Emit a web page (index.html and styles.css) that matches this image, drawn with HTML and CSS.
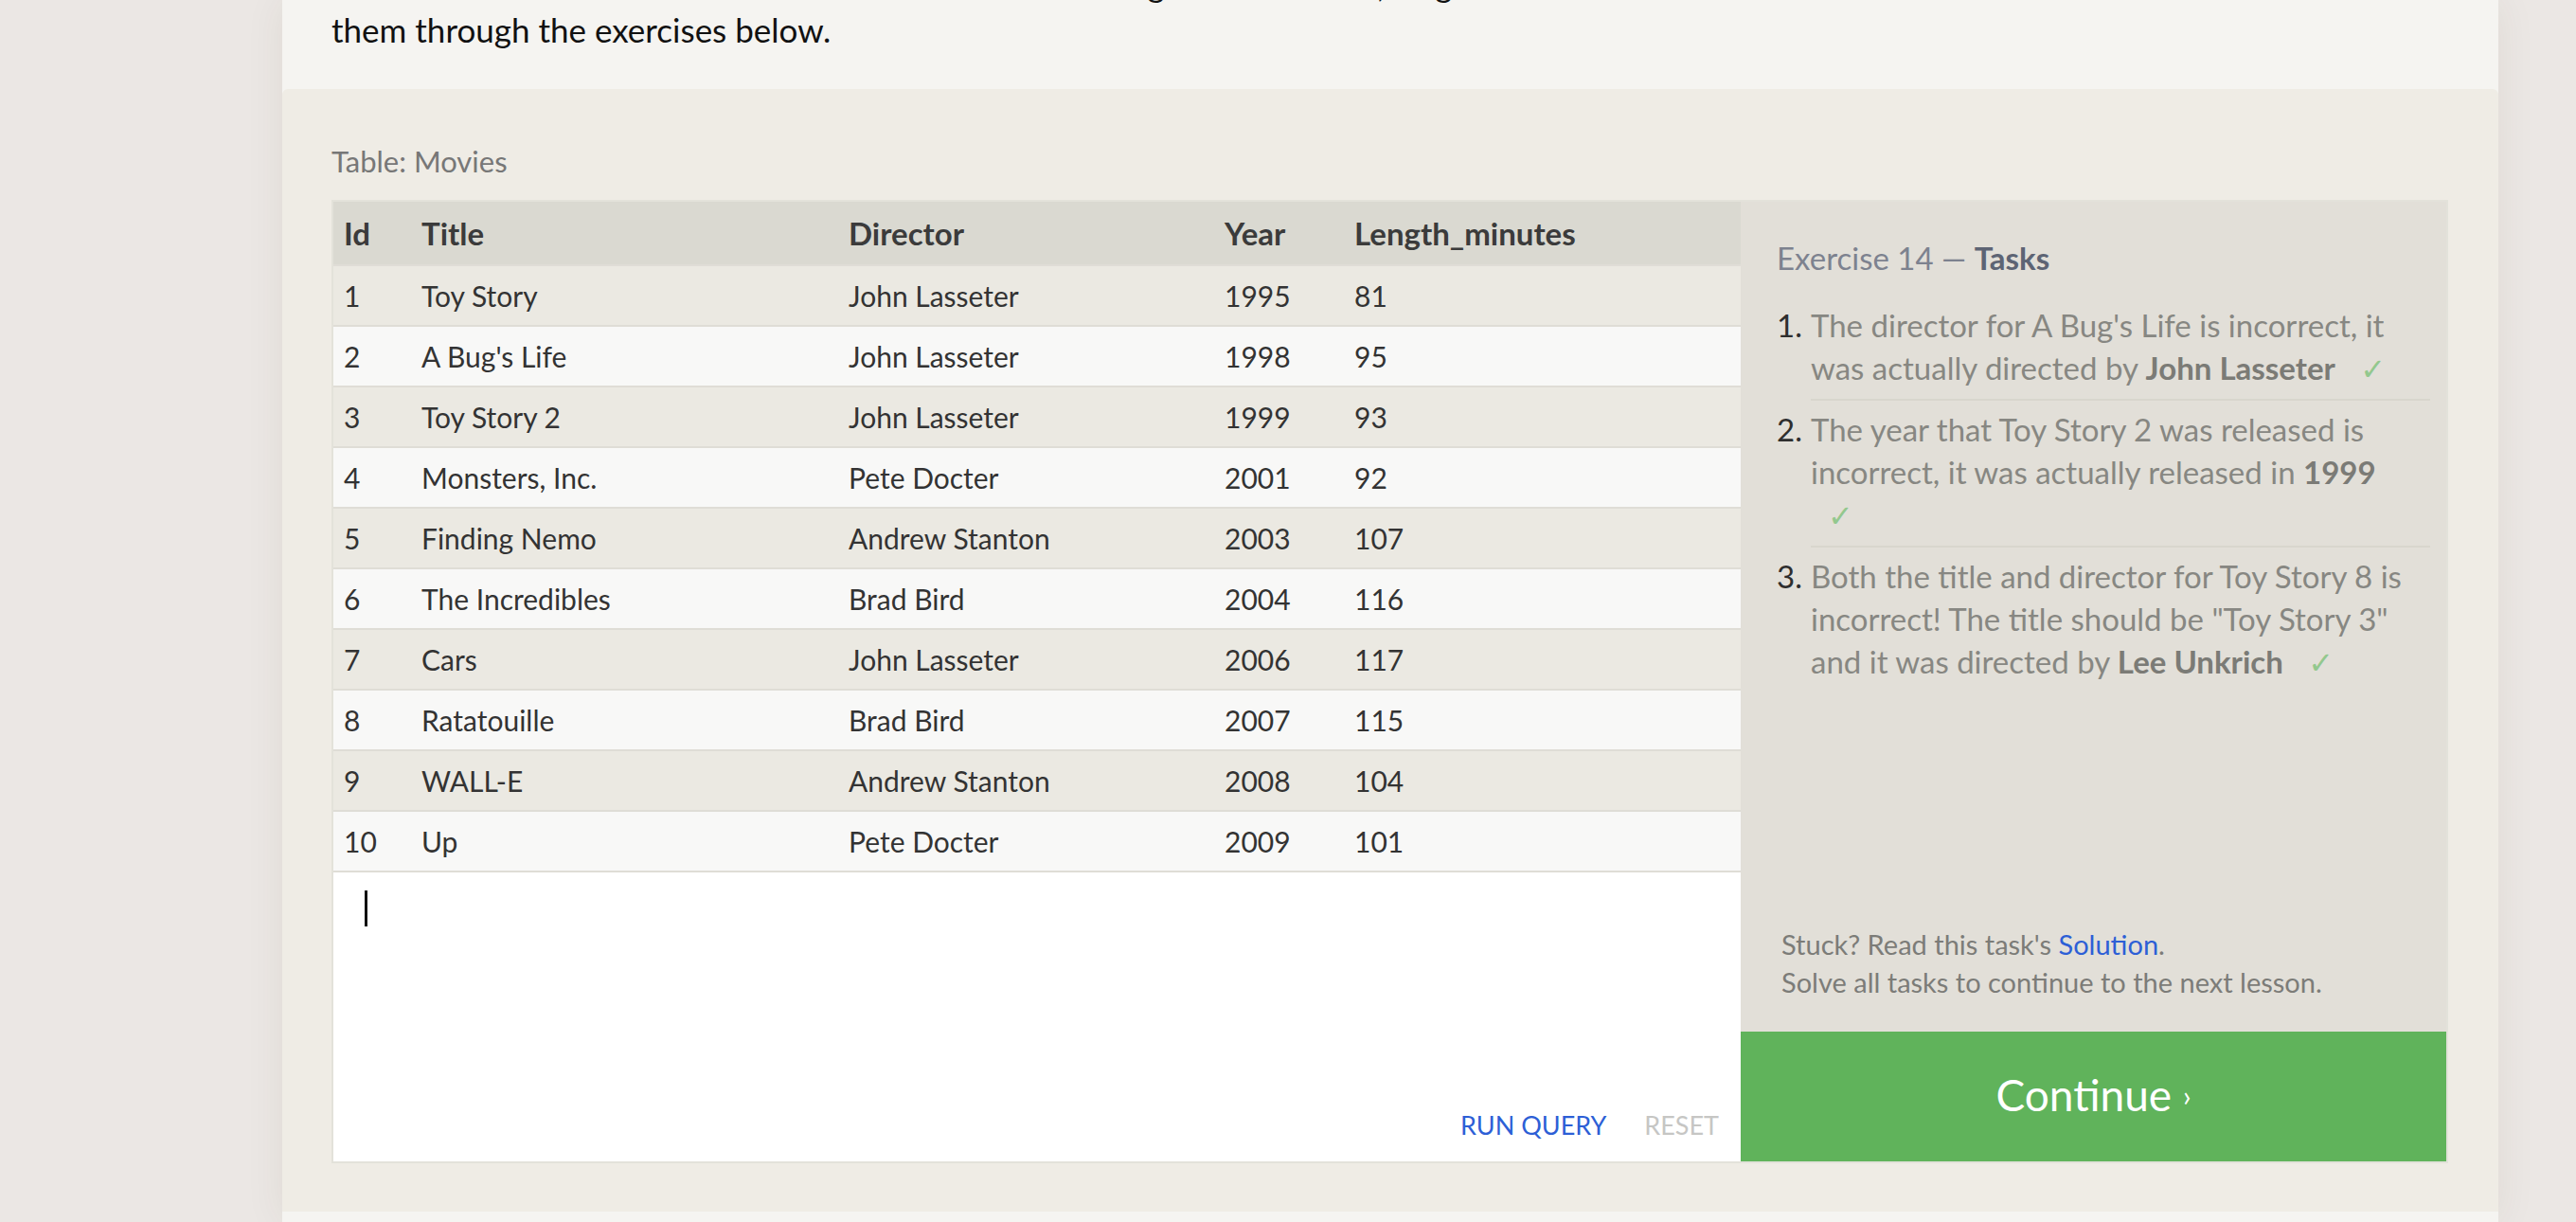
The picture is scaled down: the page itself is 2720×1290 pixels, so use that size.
FILE: index.html
```html
<!DOCTYPE html>
<html lang="en">
<head>
<meta charset="utf-8">
<title>SQL Lesson 14 — Updating rows</title>
<link rel="stylesheet" href="styles.css">
</head>
<body>
<div class="page">
  <div class="gutter"></div>
  <main class="content">
    <section class="intro">
      <p><span class="nowrap">It looks like some information in our Movies database might be incorrect, so go ahead and fix</span><br>them through the exercises below.</p>
    </section>

    <section class="exercise">
      <div class="table-label">Table: Movies</div>
      <div class="workspace">
        <div class="left">
          <table class="movies">
            <colgroup>
              <col class="c-id"><col class="c-title"><col class="c-director"><col class="c-year"><col class="c-length">
            </colgroup>
            <thead>
              <tr><th>Id</th><th>Title</th><th>Director</th><th>Year</th><th>Length_minutes</th></tr>
            </thead>
            <tbody>
              <tr><td>1</td><td>Toy Story</td><td>John Lasseter</td><td>1995</td><td>81</td></tr>
              <tr><td>2</td><td>A Bug's Life</td><td>John Lasseter</td><td>1998</td><td>95</td></tr>
              <tr><td>3</td><td>Toy Story 2</td><td>John Lasseter</td><td>1999</td><td>93</td></tr>
              <tr><td>4</td><td>Monsters, Inc.</td><td>Pete Docter</td><td>2001</td><td>92</td></tr>
              <tr><td>5</td><td>Finding Nemo</td><td>Andrew Stanton</td><td>2003</td><td>107</td></tr>
              <tr><td>6</td><td>The Incredibles</td><td>Brad Bird</td><td>2004</td><td>116</td></tr>
              <tr><td>7</td><td>Cars</td><td>John Lasseter</td><td>2006</td><td>117</td></tr>
              <tr><td>8</td><td>Ratatouille</td><td>Brad Bird</td><td>2007</td><td>115</td></tr>
              <tr><td>9</td><td>WALL-E</td><td>Andrew Stanton</td><td>2008</td><td>104</td></tr>
              <tr><td>10</td><td>Up</td><td>Pete Docter</td><td>2009</td><td>101</td></tr>
            </tbody>
          </table>
          <div class="editor">
            <span class="cursor"></span>
            <div class="actions">
              <span class="run">RUN QUERY</span>
              <span class="reset">RESET</span>
            </div>
          </div>
        </div>

        <aside class="tasks">
          <h3 class="tasks-title">Exercise 14 — <strong>Tasks</strong></h3>
          <ol class="task-list">
            <li><span class="num">1.</span><div class="task-body">The director for A Bug's Life is incorrect, it was actually directed by <b>John Lasseter</b> <span class="check">✓</span></div></li>
            <li><span class="num">2.</span><div class="task-body">The year that Toy Story 2 was released is incorrect, it was actually released in <b>1999</b> <span class="check">✓</span></div></li>
            <li><span class="num">3.</span><div class="task-body">Both the title and director for Toy Story 8 is incorrect! The title should be "Toy Story 3" and it was directed by <b>Lee Unkrich</b> <span class="check">✓</span></div></li>
          </ol>
          <div class="stuck">
            <div>Stuck? Read this task's <a class="solution">Solution</a>.</div>
            <div>Solve all tasks to continue to the next lesson.</div>
          </div>
          <div class="continue">Continue <span class="chev">›</span></div>
        </aside>
      </div>
    </section>
    <div class="after"></div>
  </main>
</div>
</body>
</html>
```

FILE: styles.css
```css
* { box-sizing: border-box; }

html, body {
  margin: 0;
  padding: 0;
  height: 100%;
  overflow: hidden;
}

body {
  background: #ebe7e4;
  font-family: "Lato", "Open Sans", sans-serif;
  color: #333;
}

.page {
  display: flex;
  min-height: 100%;
}

.gutter {
  width: 298px;
  flex: none;
}

.content {
  width: 2340px;
  flex: none;
  background: #f5f4f1;
  box-shadow: 0 0 40px rgba(70, 50, 30, 0.07);
}

.intro {
  display: flow-root;
  padding: 0 52px 39px;
}

.intro p {
  margin: -41px 0 0;
  font-size: 35px;
  line-height: 48px;
  color: #111;
}

.nowrap { white-space: nowrap; }

.exercise {
  background: #efece5;
  border-radius: 6px 6px 0 0;
  padding: 56px 53px 51px 52px;
}

.table-label {
  font-size: 31px;
  line-height: 40px;
  color: #777;
  margin-bottom: 21px;
}

.workspace {
  display: flex;
  border: 2px solid #e3e2da;
}

.left {
  width: 1486px;
  flex: none;
  display: flex;
  flex-direction: column;
}

.movies {
  width: 100%;
  table-layout: fixed;
  border-collapse: separate;
  border-spacing: 0;
  font-size: 30px;
}

.c-id { width: 82px; }
.c-title { width: 451px; }
.c-director { width: 397px; }
.c-year { width: 137px; }
.c-length { width: 419px; }

.movies th,
.movies td {
  text-align: left;
  padding: 0 11px;
  vertical-align: middle;
  white-space: nowrap;
  border-bottom: 2px solid #dfddd6;
}

.movies th {
  height: 68px;
  background: #dad9d1;
  color: #3b3b3b;
  font-weight: 700;
  font-size: 33px;
}

.movies td {
  height: 64px;
  color: #333;
}

.movies tbody tr:nth-child(odd) td { background: #ebe9e2; }
.movies tbody tr:nth-child(even) td { background: #f8f8f7; }

.editor {
  height: 305px;
  background: #fff;
  display: flex;
  flex-direction: column;
  padding: 19px 23px 20px 33px;
}

.cursor {
  display: block;
  width: 3px;
  height: 38px;
  background: #111;
}

.actions {
  margin-top: auto;
  align-self: flex-end;
  display: flex;
  gap: 40px;
  font-size: 27px;
  line-height: 36px;
}

.run { color: #2d5fd6; }
.reset { color: #c6c6c4; }

.tasks {
  flex: 1;
  background: #e2dfd8;
  display: flex;
  flex-direction: column;
}

.tasks-title {
  margin: 38px 17px 20px 38px;
  font-size: 33px;
  line-height: 42px;
  font-weight: 400;
  color: #7d828f;
}

.tasks-title strong {
  color: #5d6474;
  font-weight: 700;
}

.task-list {
  list-style: none;
  margin: 0 17px 0 38px;
  padding: 0;
  font-size: 33px;
  line-height: 45px;
  color: #878782;
}

.task-list li {
  display: flex;
}

.num {
  width: 36px;
  flex: none;
  padding-top: 8px;
  color: #2e2e2e;
}

.task-body {
  flex: 1;
  padding: 8px 0;
  border-bottom: 2px solid #d8d6cd;
}

.task-list li:last-child .task-body { border-bottom: none; }

.task-body b {
  color: #7b7b76;
  font-weight: 700;
}

.check {
  display: inline-block;
  width: 36px;
  margin-left: 18px;
  color: #93c88e;
  font-family: "DejaVu Sans", sans-serif;
  font-size: 32px;
}

.stuck {
  margin: auto 17px 32px 43px;
  font-size: 29px;
  line-height: 40px;
  color: #7c7c78;
}

.solution {
  color: #2d5fd6;
  text-decoration: none;
}

.continue {
  height: 137px;
  background: #60b35b;
  color: #fff;
  display: flex;
  align-items: center;
  justify-content: center;
  font-size: 46px;
  padding-bottom: 4px;
}

.chev {
  font-size: 30px;
  margin-left: 12px;
}

.after {
  height: 10px;
  background: #f5f4f1;
}
```
